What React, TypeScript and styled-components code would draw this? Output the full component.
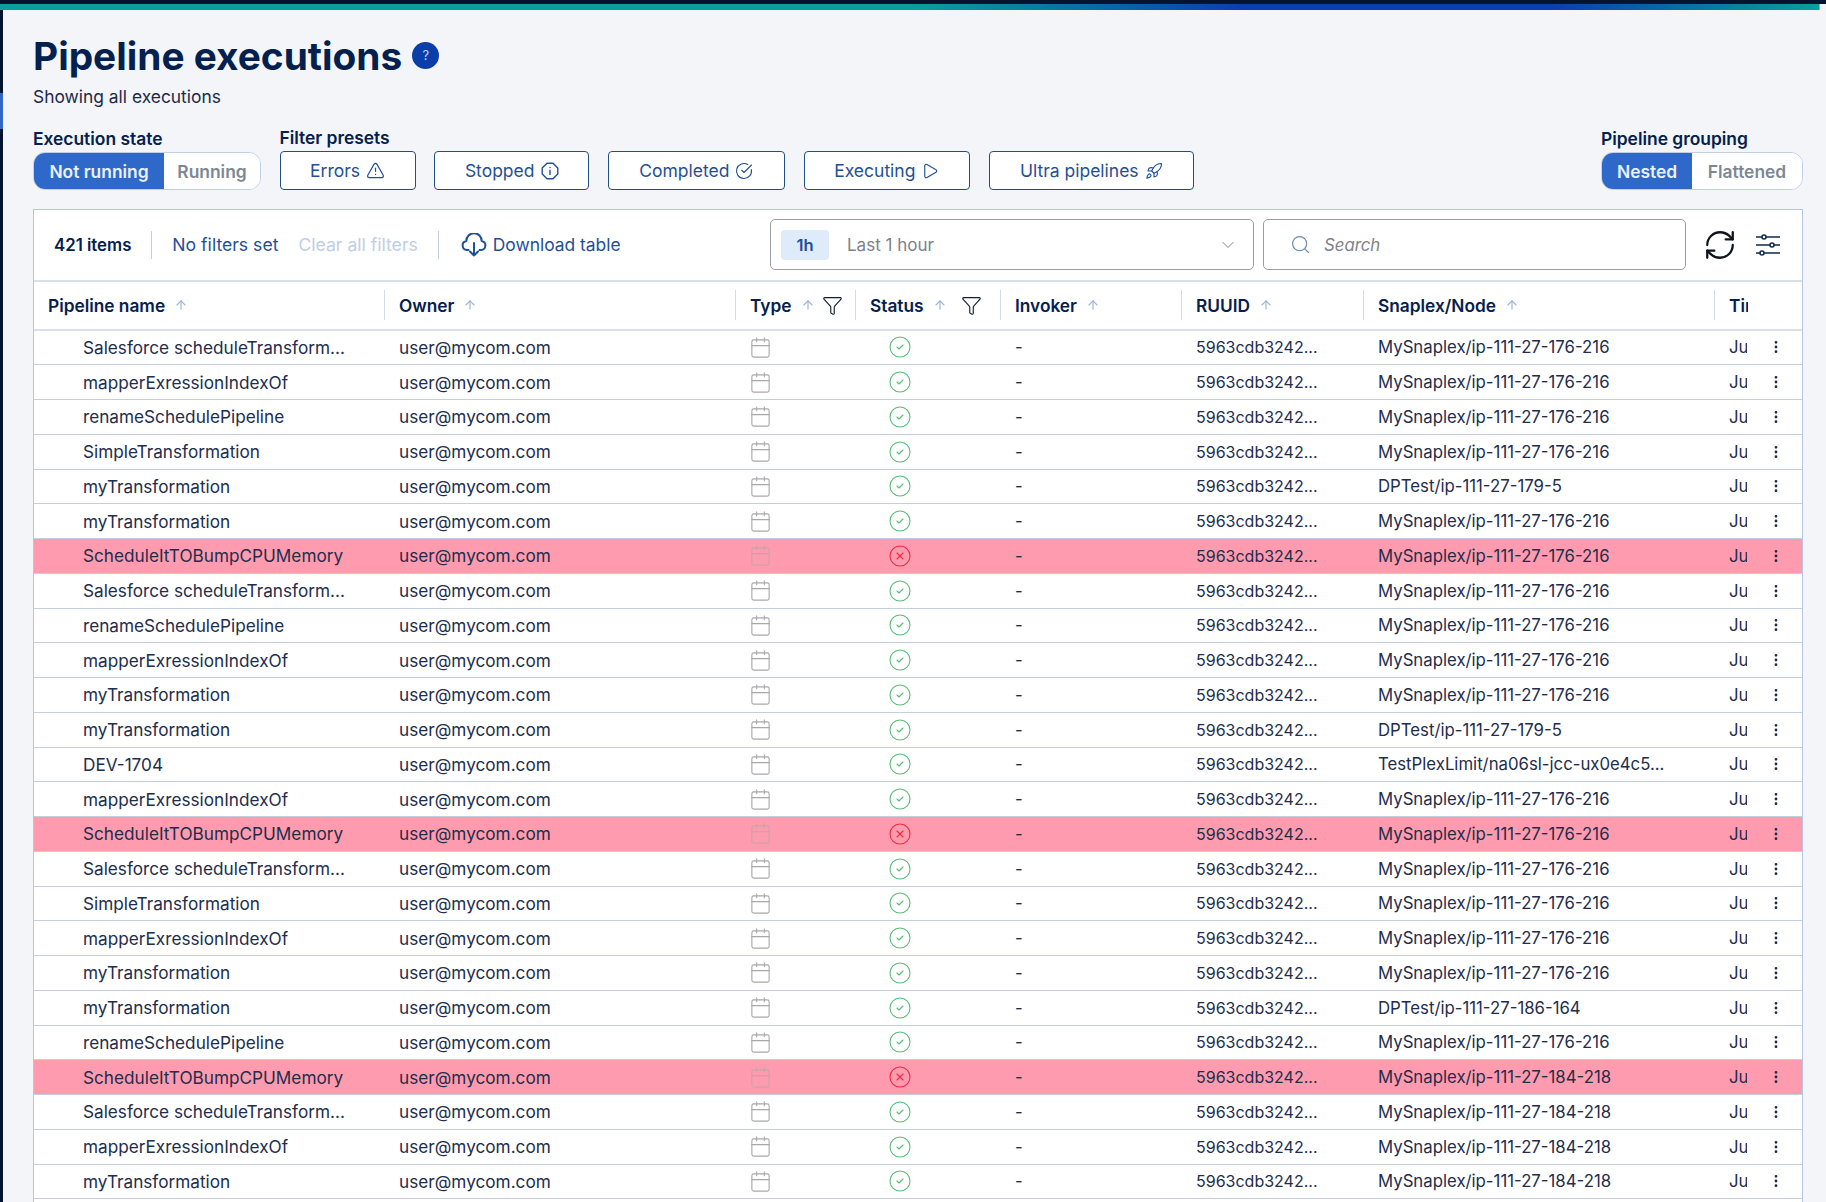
import React from 'react'
import styled, { createGlobalStyle } from 'styled-components'
import { TriangleAlert, CircleCheckBig, Play, Rocket, ArrowUp, Funnel, Search, ChevronDown, RefreshCw, Calendar, CircleCheck, CircleX, EllipsisVertical } from 'lucide-react'

const ink = '#04204f'
const link = '#1f4f96'
const line = '#c3cede'

const GlobalStyle = createGlobalStyle`
  html, body {
    margin: 0;
    padding: 0;
    background: #f3f5f8;
  }
  body {
    font-family: 'Inter', 'Liberation Sans', sans-serif;
    color: #1e2a4a;
  }
`

const Shell = styled.div`
  width: 1826px;
  height: 1202px;
  overflow: hidden;
  display: flex;
  flex-direction: column;
`

const TopBar = styled.div`
  flex: none;
  height: 10px;
  border-top: 4px solid #04142f;
  box-sizing: border-box;
  background: linear-gradient(90deg, #07a09c 0%, #07a09c 50%, #0a3fae 68%, #0a3fae 85%, #07a09c 99.6%, #f3f5f8 99.7%);
`

const Body = styled.div`
  flex: 1;
  min-height: 0;
  display: flex;
`

const Rail = styled.div`
  flex: none;
  width: 3px;
  padding-top: 83px;
  background: #04142f;
`

const RailMark = styled.div`
  height: 36px;
  background: #2e69c9;
`

const Main = styled.main`
  flex: 1;
  min-width: 0;
  padding: 22px 23px 0 30px;
  display: flex;
  flex-direction: column;
`

const TitleRow = styled.div`
  display: flex;
  align-items: center;
  gap: 10px;
  height: 46px;
`

const Title = styled.h1`
  margin: 0;
  font-size: 38.8px;
  font-weight: 700;
  color: ${ink};
`

const HelpBadge = styled.span`
  width: 27px;
  height: 27px;
  border-radius: 50%;
  background: #0b3ea8;
  color: #c8d6f2;
  font-size: 13px;
  display: flex;
  align-items: center;
  justify-content: center;
`

const Subtitle = styled.p`
  margin: 8px 0 0;
  font-size: 17.4px;
  line-height: 21px;
  color: #1e2a4a;
`

const FilterBar = styled.div`
  display: flex;
  align-items: flex-end;
  gap: 18.5px;
  margin-top: 21px;
`

const FilterGroup = styled.div<{ $push?: boolean }>`
  display: flex;
  flex-direction: column;
  gap: 4px;
  margin-left: ${p => (p.$push ? 'auto' : '0')};
`

const GroupLabel = styled.div`
  font-size: 17.4px;
  font-weight: 600;
  line-height: 19px;
  color: ${ink};
`

const Toggle = styled.div`
  display: flex;
  height: 38px;
  box-sizing: border-box;
  border: 1px solid #c3cfe6;
  border-radius: 12px;
  overflow: hidden;
  background: #fff;
`

const ToggleItem = styled.div<{ $on?: boolean; $w: number }>`
  width: ${p => p.$w}px;
  display: flex;
  align-items: center;
  justify-content: center;
  font-size: 17.4px;
  font-weight: 600;
  background: ${p => (p.$on ? '#2e69c9' : '#fff')};
  color: ${p => (p.$on ? '#eaf1fb' : '#7d8793')};
`

const Presets = styled.div`
  display: flex;
  gap: 18.7px;
`

const Preset = styled.button<{ $w: number }>`
  width: ${p => p.$w}px;
  height: 39px;
  box-sizing: border-box;
  display: flex;
  align-items: center;
  justify-content: center;
  gap: 6px;
  padding: 0;
  background: #fff;
  border: 1px solid #1f4f86;
  border-radius: 4px;
  color: ${link};
  font: 400 17.5px 'Inter', 'Liberation Sans', sans-serif;
`

const TableCard = styled.section`
  margin-top: 19px;
  flex: 1;
  min-height: 0;
  background: #fff;
  border: 1px solid #b9c5de;
  border-bottom: 0;
  overflow: hidden;
`

const Toolbar = styled.div`
  height: 71.5px;
  box-sizing: border-box;
  display: flex;
  align-items: center;
  padding: 0 22px 0 20px;
  border-bottom: 2px solid #d9e0ea;
`

const Count = styled.span`
  font-size: 16.8px;
  font-weight: 600;
  color: ${ink};
`

const Divider = styled.span<{ $gap: number }>`
  width: 1px;
  height: 28px;
  margin: 0 20px 0 ${p => p.$gap}px;
  background: #c3cede;
`

const LinkText = styled.span<{ $muted?: boolean }>`
  font-size: 17.6px;
  color: ${p => (p.$muted ? '#bfcde6' : link)};
  margin-right: 20px;
`

const DownloadLink = styled.span`
  display: flex;
  align-items: center;
  gap: 6px;
  margin-left: 2px;
  font-size: 17.4px;
  color: ${link};
`

const Field = styled.div<{ $w: number; $left: string }>`
  width: ${p => p.$w}px;
  height: 51px;
  box-sizing: border-box;
  flex: none;
  margin-left: ${p => p.$left};
  display: flex;
  align-items: center;
  border: 1px solid #9a9da3;
  border-radius: 5px;
  background: #fff;
`

const RangeChip = styled.span`
  width: 48px;
  height: 30px;
  margin-left: 10px;
  border-radius: 4px;
  background: #deebfa;
  color: ${link};
  font-size: 16.5px;
  font-weight: 600;
  display: flex;
  align-items: center;
  justify-content: center;
`

const RangeText = styled.span`
  flex: 1;
  margin-left: 18px;
  font-size: 17px;
  color: #7d8288;
`

const RangeChevron = styled(ChevronDown)`
  margin-right: 15px;
  color: #7d8288;
`

const SearchIcon = styled(Search)`
  margin-left: 26px;
  color: #6c8cb5;
`

const SearchText = styled.span`
  margin-left: 13px;
  font-size: 16.8px;
  font-style: italic;
  color: #7d8288;
`

const ToolIcons = styled.div`
  display: flex;
  align-items: center;
  gap: 19px;
  margin-left: 17px;
  color: #10141c;
`

const Row = styled.div<{ $failed?: boolean }>`
  display: grid;
  grid-template-columns: 350px 351px 120px 145px 181px 182px 351px 88px;
  height: 34.75px;
  box-sizing: border-box;
  align-items: center;
  border-bottom: 1.5px solid ${line};
  background: ${p => (p.$failed ? '#ff9bae' : '#fff')};
  font-size: 16.75px;
`

const HeadRow = styled(Row)`
  height: 49px;
  border-bottom: 2px solid #d9e0ea;
`

const Head = styled.div<{ $sep?: boolean }>`
  display: flex;
  align-items: center;
  height: 30px;
  padding-left: 14px;
  border-left: ${p => (p.$sep ? '1px solid #d3dbe8' : '0')};
  font-size: 17.3px;
  font-weight: 600;
  color: ${ink};
  overflow: hidden;
  white-space: nowrap;
`

const SortIcon = styled(ArrowUp)`
  margin-left: 9px;
  color: #9db4dc;
`

const HeadFilter = styled(Funnel)<{ $right: number }>`
  margin-left: auto;
  margin-right: ${p => p.$right}px;
  color: #10202e;
`

const CutHead = styled.span`
  width: 19px;
  overflow: hidden;
`

const Cell = styled.div<{ $indent?: number; $size?: number }>`
  padding-left: ${p => p.$indent ?? 15}px;
  font-size: ${p => (p.$size ? `${p.$size}px` : 'inherit')};
  white-space: nowrap;
  overflow: hidden;
  color: #222d4c;
`

const IconCell = styled.div<{ $indent: number; $faded?: boolean }>`
  display: flex;
  align-items: center;
  padding-left: ${p => p.$indent}px;
  color: #a8a8a8;
  opacity: ${p => (p.$faded ? 0.6 : 1)};
`

const TimeCell = styled.div`
  display: flex;
  align-items: center;
  justify-content: space-between;
  padding: 0 18px 0 15px;
  color: #222d4c;
`

const CutText = styled.span`
  width: 18px;
  overflow: hidden;
`

const MoreIcon = styled(EllipsisVertical)`
  color: #1e2a4a;
`

const CloudDownload = () => (
  <svg width="26" height="24" viewBox="0 0 26 24" fill="none" stroke="#1f4f96" strokeWidth="2" strokeLinecap="round" strokeLinejoin="round">
    <path d="M7.5 17H6a4.6 4.6 0 0 1-.7-9.1 7.6 7.6 0 0 1 15.4 0 4.6 4.6 0 0 1-.7 9.1h-1.5" />
    <path d="M13 10v12.5M9 18.5l4 4 4-4" />
  </svg>
)

const OctagonInfo = () => (
  <svg width="18" height="18" viewBox="0 0 18 18" fill="none" stroke="currentColor" strokeWidth="1.4" strokeLinejoin="round" strokeLinecap="round">
    <path d="M6 1.2h6L16.8 6v6L12 16.8H6L1.2 12V6z" />
    <path d="M9 8.2v4.2M9 5.4v.2" />
  </svg>
)

const Sliders = () => (
  <svg width="24" height="22" viewBox="0 0 24 22" fill="none" stroke="#0e2a52" strokeWidth="1.6">
    <path d="M0 3h6M10 3h14M0 11h14M18 11h6M0 19h4M8 19h16" />
    <circle cx="8" cy="3" r="2" />
    <circle cx="16" cy="11" r="2" />
    <circle cx="6" cy="19" r="2" />
  </svg>
)

const presets = [
  { label: 'Errors', width: 136, icon: <TriangleAlert size={19} strokeWidth={1.5} /> },
  { label: 'Stopped', width: 155, icon: <OctagonInfo /> },
  { label: 'Completed', width: 177, icon: <CircleCheckBig size={18} strokeWidth={1.5} /> },
  { label: 'Executing', width: 166.5, icon: <Play size={18} strokeWidth={1.5} /> },
  { label: 'Ultra pipelines', width: 205, icon: <Rocket size={18} strokeWidth={1.5} /> },
]

const columns = [
  { label: 'Pipeline name' },
  { label: 'Owner' },
  { label: 'Type', filterRight: 12 },
  { label: 'Status', filterRight: 18 },
  { label: 'Invoker' },
  { label: 'RUUID' },
  { label: 'Snaplex/Node' },
]

const sfx = 'Salesforce scheduleTransform...'
const mapper = 'mapperExressionIndexOf'
const rename = 'renameSchedulePipeline'
const simple = 'SimpleTransformation'
const mine = 'myTransformation'
const bump = 'ScheduleItTOBumpCPUMemory'
const n216 = 'MySnaplex/ip-111-27-176-216'
const n218 = 'MySnaplex/ip-111-27-184-218'
const dp5 = 'DPTest/ip-111-27-179-5'

const rows: [string, string][] = [
  [sfx, n216], [mapper, n216], [rename, n216], [simple, n216], [mine, dp5], [mine, n216],
  [bump, n216], [sfx, n216], [rename, n216], [mapper, n216], [mine, n216], [mine, dp5],
  ['DEV-1704', 'TestPlexLimit/na06sl-jcc-ux0e4c5...'], [mapper, n216], [bump, n216], [sfx, n216],
  [simple, n216], [mapper, n216], [mine, n216], [mine, 'DPTest/ip-111-27-186-164'], [rename, n216],
  [bump, n218], [sfx, n218], [mapper, n218], [mine, n218],
]

export default function App() {
  return (
    <Shell>
      <GlobalStyle />
      <TopBar />
      <Body>
        <Rail><RailMark /></Rail>
        <Main>
          <TitleRow>
            <Title>Pipeline executions</Title>
            <HelpBadge>?</HelpBadge>
          </TitleRow>
          <Subtitle>Showing all executions</Subtitle>

          <FilterBar>
            <FilterGroup>
              <GroupLabel>Execution state</GroupLabel>
              <Toggle>
                <ToggleItem $on $w={130}>Not running</ToggleItem>
                <ToggleItem $w={96}>Running</ToggleItem>
              </Toggle>
            </FilterGroup>
            <FilterGroup>
              <GroupLabel>Filter presets</GroupLabel>
              <Presets>
                {presets.map(p => (
                  <Preset key={p.label} $w={p.width}>{p.label} {p.icon}</Preset>
                ))}
              </Presets>
            </FilterGroup>
            <FilterGroup $push>
              <GroupLabel>Pipeline grouping</GroupLabel>
              <Toggle>
                <ToggleItem $on $w={90}>Nested</ToggleItem>
                <ToggleItem $w={110}>Flattened</ToggleItem>
              </Toggle>
            </FilterGroup>
          </FilterBar>

          <TableCard>
            <Toolbar>
              <Count>421 items</Count>
              <Divider $gap={20} />
              <LinkText>No filters set</LinkText>
              <LinkText $muted>Clear all filters</LinkText>
              <Divider $gap={0} />
              <DownloadLink><CloudDownload /> Download table</DownloadLink>
              <Field $w={484} $left="auto">
                <RangeChip>1h</RangeChip>
                <RangeText>Last 1 hour</RangeText>
                <RangeChevron size={20} strokeWidth={1.2} />
              </Field>
              <Field $w={423} $left="9px">
                <SearchIcon size={21} strokeWidth={1.4} />
                <SearchText>Search</SearchText>
              </Field>
              <ToolIcons>
                <RefreshCw size={34} strokeWidth={1.6} />
                <Sliders />
              </ToolIcons>
            </Toolbar>

            <HeadRow>
              {columns.map((c, i) => (
                <Head key={c.label} $sep={i > 0}>
                  {c.label}
                  <SortIcon size={14} strokeWidth={2} />
                  {c.filterRight !== undefined && <HeadFilter $right={c.filterRight} size={21} strokeWidth={1.3} />}
                </Head>
              ))}
              <Head $sep><CutHead>Time</CutHead></Head>
            </HeadRow>

            {rows.map(([name, node], i) => {
              const failed = name === bump
              return (
                <Row key={i} $failed={failed}>
                  <Cell $indent={49} $size={17.2}>{name}</Cell>
                  <Cell $size={17.2}>user@mycom.com</Cell>
                  <IconCell $indent={14} $faded={failed}><Calendar size={23} strokeWidth={1.15} /></IconCell>
                  <IconCell $indent={33}>
                    {failed
                      ? <CircleX size={24} strokeWidth={1.1} color="#f0293f" />
                      : <CircleCheck size={24} strokeWidth={1.1} color="#57bf76" />}
                  </IconCell>
                  <Cell>-</Cell>
                  <Cell $size={16}>5963cdb3242...</Cell>
                  <Cell>{node}</Cell>
                  <TimeCell>
                    <CutText>Jul</CutText>
                    <MoreIcon size={16} strokeWidth={2.2} />
                  </TimeCell>
                </Row>
              )
            })}
          </TableCard>
        </Main>
      </Body>
    </Shell>
  )
}
